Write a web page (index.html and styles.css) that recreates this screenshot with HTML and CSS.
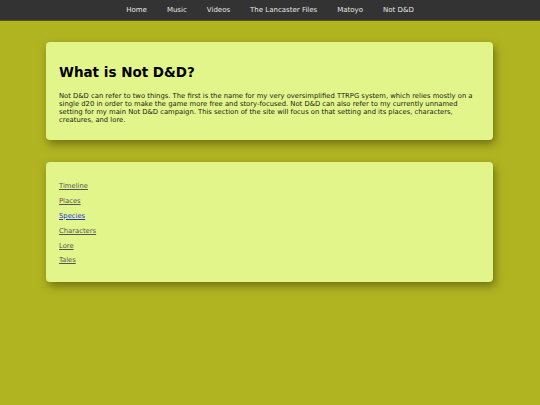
FILE: index.html
```html
<!DOCTYPE html>
<html>
<head>
<meta charset="utf-8">
<link rel="stylesheet" href="styles.css">
</head>
<body>
<nav class="topnav">
  <a href="#">Home</a>
  <a href="#">Music</a>
  <a href="#">Videos</a>
  <a href="#">The Lancaster Files</a>
  <a href="#">Matoyo</a>
  <a href="#">Not D&amp;D</a>
</nav>
<main class="content">
  <section class="card intro">
    <h1>What is Not D&amp;D?</h1>
    <p>Not D&amp;D can refer to two things. The first is the name for my very oversimplified TTRPG system, which relies mostly on a single d20 in order to make the game more free and story-focused. Not D&amp;D can also refer to my currently unnamed setting for my main Not D&amp;D campaign. This section of the site will focus on that setting and its places, characters, creatures, and lore.</p>
  </section>
  <section class="card links">
    <a class="visited" href="#">Timeline</a>
    <a class="visited" href="#">Places</a>
    <a class="fresh" href="#">Species</a>
    <a class="visited" href="#">Characters</a>
    <a class="visited" href="#">Lore</a>
    <a class="visited" href="#">Tales</a>
  </section>
</main>
</body>
</html>
```
FILE: styles.css
```css
html, body {
  margin: 0;
  padding: 0;
}
body {
  background: #b0b421;
  font-family: "DejaVu Sans", Verdana, sans-serif;
  min-height: 405px;
}
.topnav {
  background: #333333;
  height: 20px;
  display: flex;
  justify-content: center;
  align-items: center;
  gap: 20px;
  border-bottom: 1px solid #55571c;
}
.topnav a {
  color: #e6e6e6;
  font-size: 7px;
  text-decoration: none;
}
.content {
  display: flex;
  flex-direction: column;
  gap: 22px;
  padding: 21px 47px 0 46px;
}
.card {
  background: #e2f58a;
  border-radius: 4px;
  box-shadow: 2px 4px 8px rgba(60, 60, 0, 0.55);
  padding: 0 13px;
}
.intro {
  padding-top: 21px;
  padding-bottom: 16px;
}
.intro h1 {
  margin: 0 0 11px 0;
  font-size: 13.5px;
  font-weight: bold;
  color: #000;
  line-height: 18px;
}
.intro p {
  margin: 0;
  font-size: 6.8px;
  line-height: 8px;
  color: #1a1a1a;
}
.links {
  display: flex;
  flex-direction: column;
  align-items: flex-start;
  gap: 6.9px;
  padding-top: 20px;
  padding-bottom: 18px;
}
.links a {
  font-size: 6.8px;
  line-height: 8px;
}
.links a.visited {
  color: #555555;
}
.links .fresh {
  color: #1f36d6;
}
```
